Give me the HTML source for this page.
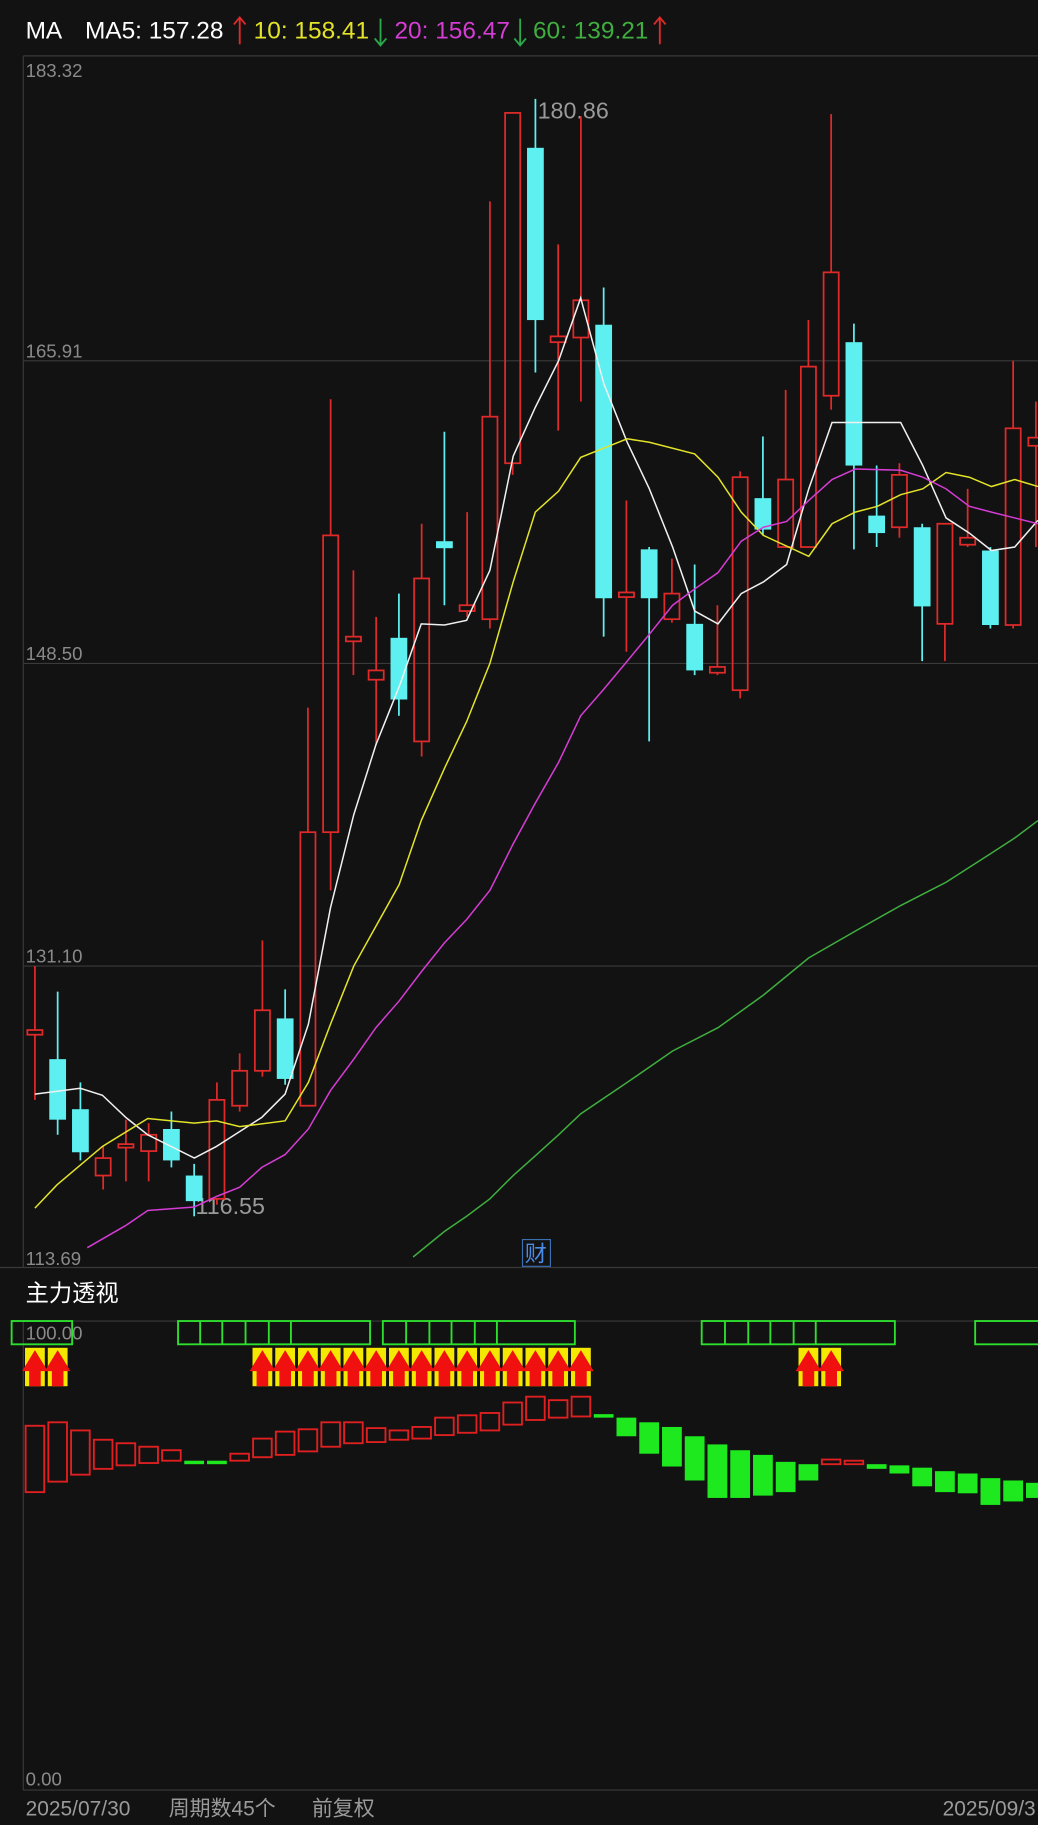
<!DOCTYPE html>
<html><head><meta charset="utf-8"><style>
html,body{margin:0;padding:0;background:#121212;}
svg{display:block}
text{font-family:"Liberation Sans","Noto Sans CJK SC",sans-serif;}
</style></head><body>
<svg id="s" width="1038" height="1825" viewBox="0 0 892 1568" preserveAspectRatio="none" xmlns="http://www.w3.org/2000/svg">
<rect width="892" height="1568" fill="#121212"/>
<g stroke="#3a3a3a" stroke-width="1">
<line x1="20" y1="48" x2="892" y2="48"/>
<line x1="20" y1="310" x2="892" y2="310"/>
<line x1="20" y1="570" x2="892" y2="570"/>
<line x1="20" y1="830" x2="892" y2="830"/>
<line x1="0" y1="1089" x2="892" y2="1089"/>
<line x1="20" y1="1135" x2="892" y2="1135"/>
<line x1="20" y1="1538" x2="892" y2="1538"/>
<line x1="20" y1="48" x2="20" y2="1089"/>
<line x1="20" y1="1135" x2="20" y2="1538"/>
</g>
<g font-size="21">
<text x="22" y="33" fill="#fff">MA</text>
<text x="73" y="33" fill="#fff">MA5: 157.28</text>
<text x="218" y="33" fill="#e3e32a">10: 158.41</text>
<text x="339" y="33" fill="#d43cd4">20: 156.47</text>
<text x="458" y="33" fill="#3fae3f">60: 139.21</text>
</g>
<g stroke-width="1.6" fill="none">
<path d="M206 38V16M201 21L206 15L211 21" stroke="#e02a2a"/>
<path d="M327 16V38M322 33L327 39L332 33" stroke="#2aa84a"/>
<path d="M447 16V38M442 33L447 39L452 33" stroke="#2aa84a"/>
<path d="M567 38V16M562 21L567 15L572 21" stroke="#e02a2a"/>
</g>
<g font-size="16" fill="#8a8a8a">
<text x="22" y="66">183.32</text>
<text x="22" y="307">165.91</text>
<text x="22" y="567">148.50</text>
<text x="22" y="827">131.10</text>
<text x="22" y="1087">113.69</text>
<text x="22" y="1151">100.00</text>
<text x="22" y="1534">0.00</text>
</g>
<text x="462" y="102" font-size="20" fill="#9a9a9a">180.86</text>
<text x="168" y="1043" font-size="20" fill="#9a9a9a">116.55</text>
<rect x="449" y="1065" width="24" height="23" fill="none" stroke="#3a6fb0" stroke-width="1"/>
<text x="451" y="1084" font-size="19" fill="#4a8ae8">财</text>
<text x="22" y="1118" font-size="20" fill="#fff">主力透视</text>
<g font-size="18" fill="#9a9a9a">
<text x="22" y="1560">2025/07/30</text>
<text x="145" y="1560">周期数45个</text>
<text x="268" y="1560">前复权</text>
<text x="810" y="1560">2025/09/3</text>
</g>
<g id="g"></g>
</svg>
<script>
var g=document.getElementById('g'),h='';
var C=[['r',885,889,830,945],['c',910,962,852,975],['c',953,990,930,997],['r',995,1010,985,1022],['r',983,986,962,1015],['r',975,989,965,1015],['c',970,997,955,1003],['c',1010,1032,1000,1045],['r',945,1030,930,1035],['r',920,950,905,955],['r',868,920,808,925],['c',875,927,850,932],['r',715,950,608,950],['r',460,715,343,765],['r',547,551,490,580],['r',576,584,530,640],['c',548,601,510,615],['r',497,637,450,650],['c',465,471,371,520],['r',520,525,440,530],['r',358,532,173,540],['r',97,398,97,408],['c',127,275,85,320],['r',289,294,210,370],['r',258,290,100,345],['c',279,514,247,547],['r',509,513,430,560],['c',472,514,470,637],['r',510,532,480,535],['c',536,576,485,580],['r',573,578,520,580],['r',410,593,405,600],['c',428,455,375,460],['r',412,470,335,470],['r',315,470,275,470],['r',234,340,98,352],['c',294,400,278,472],['c',443,458,400,470],['r',408,453,398,462],['c',453,521,450,568],['r',450,536,450,568],['r',462,468,420,470],['c',473,537,470,540],['r',368,537,310,540],['r',376,383,345,470]];
C.forEach(function(c,i){var x=30+19.55*i,w=13;
if(c[0]=='r'){h+='<line x1="'+x+'" y1="'+c[3]+'" x2="'+x+'" y2="'+c[1]+'" stroke="#e02a2a" stroke-width="1.5"/><line x1="'+x+'" y1="'+c[2]+'" x2="'+x+'" y2="'+c[4]+'" stroke="#e02a2a" stroke-width="1.5"/><rect x="'+(x-w/2)+'" y="'+c[1]+'" width="'+w+'" height="'+Math.max(c[2]-c[1],2)+'" fill="none" stroke="#e02a2a" stroke-width="1.5"/>';}
else{h+='<line x1="'+x+'" y1="'+c[3]+'" x2="'+x+'" y2="'+c[4]+'" stroke="#5ef0f0" stroke-width="1.5"/><rect x="'+(x-w/2-0.7)+'" y="'+c[1]+'" width="'+(w+1.4)+'" height="'+Math.max(c[2]-c[1],3)+'" fill="#5ef0f0"/>';}});
function pl(p,col){h+='<polyline points="'+p+'" fill="none" stroke="'+col+'" stroke-width="1.3"/>';}
pl('30,940 69,935 88,941 108,960 127,975 167,995 186,985 225,960 245,940 265,880 284,780 304,700 323,640 343,590 362,536 382,537 401,533 421,490 441,392 460,350 480,310 499,256 519,330 539,380 558,420 578,470 597,525 617,536 637,510 656,500 676,485 695,420 715,363 735,363 774,363 793,400 813,445 833,458 852,473 872,470 892,447','#f0f0f0');
pl('30,1038 49,1018 88,985 127,961 167,965 186,963 206,968 245,963 265,930 284,880 304,830 343,760 362,705 382,660 401,620 421,570 441,500 460,440 480,422 499,393 519,385 539,377 558,380 597,390 617,410 637,440 656,460 695,478 715,450 735,440 754,435 774,425 793,420 813,406 833,410 852,418 872,412 892,418','#e3e32a');
pl('75,1072 108,1053 127,1040 167,1037 186,1028 206,1020 225,1003 245,992 265,970 284,937 304,910 323,883 343,860 362,835 382,810 401,790 421,765 441,725 460,690 480,655 499,615 519,592 539,568 558,545 578,520 597,506 617,492 637,465 656,453 676,448 695,430 715,412 735,403 774,404 793,410 813,420 833,435 852,440 872,445 892,450','#d43cd4');
pl('355,1080 382,1058 401,1045 421,1030 441,1010 460,993 480,975 499,957 539,930 578,903 617,883 656,855 695,823 735,800 774,778 813,758 852,733 872,720 892,705','#3fae3f');
// green boxes
[[10,62,[]],[153,318,[172,191,211,231,250]],[329,494,[349,369,388,408,427]],[603,769,[623,643,662,682,701]],[838,900,[]]].forEach(function(b){
h+='<rect x="'+b[0]+'" y="1135" width="'+(b[1]-b[0])+'" height="20" fill="none" stroke="#2ee02e" stroke-width="1.6"/>';
b[2].forEach(function(d){h+='<line x1="'+d+'" y1="1135" x2="'+d+'" y2="1155" stroke="#2ee02e" stroke-width="1.6"/>';});});
var A=[0,1,10,11,12,13,14,15,16,17,18,19,20,21,22,23,24,34,35];
A.forEach(function(i){var x=30+19.55*i;
h+='<rect x="'+(x-8.5)+'" y="1158" width="17" height="33" fill="#f5e800"/><path d="M'+(x-11)+' 1178L'+x+' 1160L'+(x+11)+' 1178H'+(x+5)+'V1191H'+(x-5)+'V1178Z" fill="#f01010"/>';});
var B=[['r',1225,1282],['r',1222,1273],['r',1229,1267],['r',1237,1262],['r',1240,1259],['r',1243,1257],['r',1246,1255],['g',1255,1258],['g',1255,1258],['r',1249,1255],['r',1236,1252],['r',1230,1250],['r',1228,1247],['r',1222,1243],['r',1222,1240],['r',1227,1239],['r',1229,1237],['r',1226,1236],['r',1218,1233],['r',1216,1231],['r',1214,1229],['r',1205,1224],['r',1200,1220],['r',1203,1218],['r',1200,1217],['g',1215,1218],['g',1218,1234],['g',1222,1249],['g',1226,1260],['g',1234,1272],['g',1241,1287],['g',1246,1287],['g',1250,1285],['g',1256,1282],['g',1258,1272],['r',1254,1258],['r',1255,1258],['g',1258,1262],['g',1259,1266],['g',1261,1277],['g',1264,1282],['g',1266,1283],['g',1270,1293],['g',1272,1290],['g',1274,1287]];
B.forEach(function(b,i){var x=30+19.55*i;
if(b[0]=='r')h+='<rect x="'+(x-8)+'" y="'+b[1]+'" width="16" height="'+(b[2]-b[1])+'" fill="none" stroke="#e02020" stroke-width="1.6"/>';
else h+='<rect x="'+(x-8.5)+'" y="'+b[1]+'" width="17" height="'+(b[2]-b[1])+'" fill="#1ee81e"/>';});
g.innerHTML=h;
</script>
</body></html>
